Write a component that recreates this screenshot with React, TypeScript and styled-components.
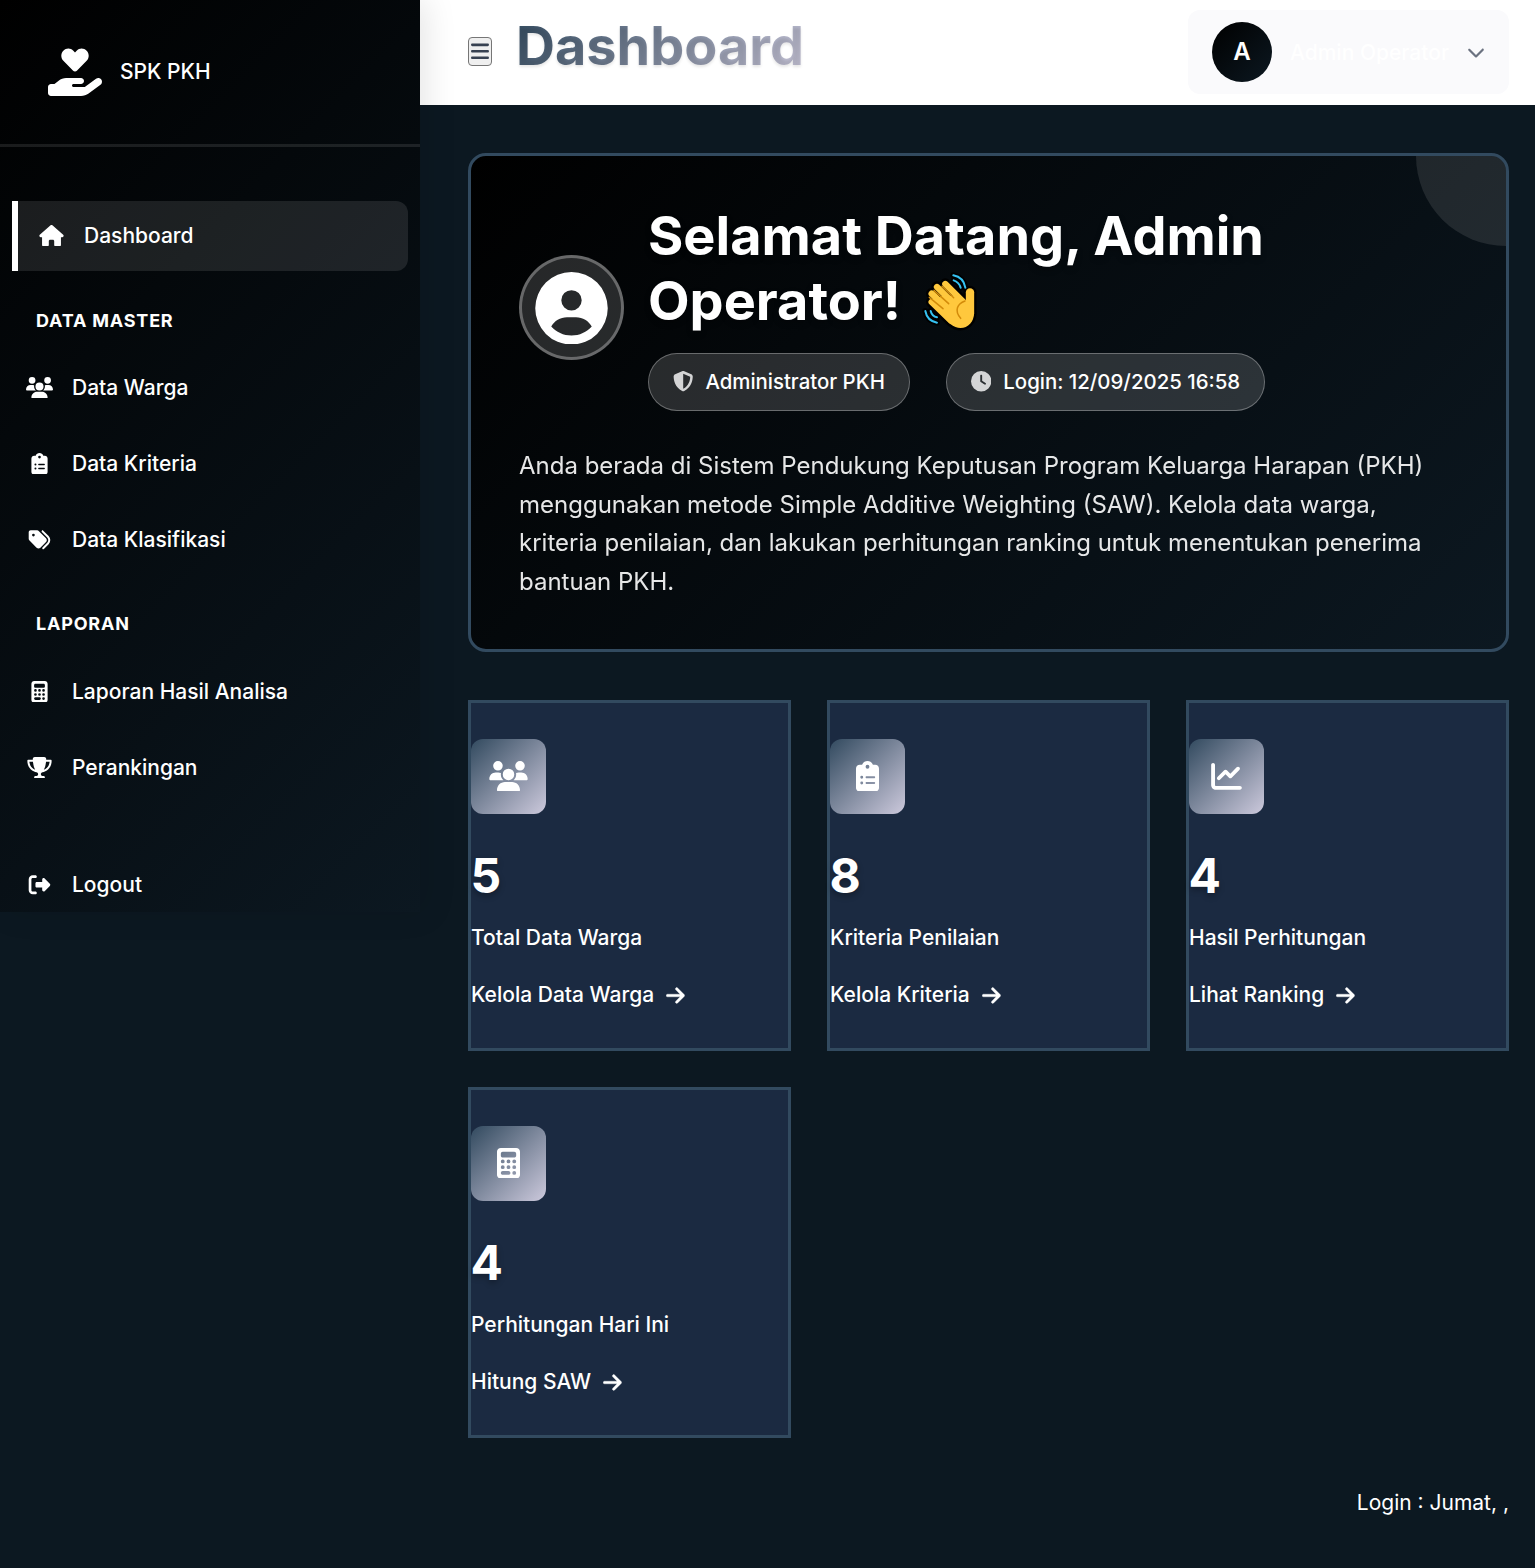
import React from "react";
import styled, { createGlobalStyle } from "styled-components";
import {
  FaArrowRight, FaBars, FaCalculator, FaChartLine, FaChevronDown, FaCircleUser, FaClipboardList,
  FaClock, FaHandHoldingHeart, FaHouse, FaRightFromBracket, FaShieldHalved, FaTags, FaTrophy, FaUsers,
} from "react-icons/fa6";

const Global = createGlobalStyle`
  *, *::before, *::after { box-sizing: border-box; }
  body { margin: 0; background: #0c1821; color: #fff; font-family: Inter, "Liberation Sans", sans-serif; font-size: 21px; }
  h1, h2, p { margin: 0; }
  a { color: inherit; text-decoration: none; }
`;

const Page = styled.div`
  display: flex;
  align-items: flex-start;
  width: 1535px;
  height: 1568px;
  overflow: hidden;
`;

const Sidebar = styled.aside`
  flex: none;
  width: 420px;
  height: 912px;
  overflow: hidden;
  background: linear-gradient(135deg, #000 0%, #0c1821 100%);
  box-shadow: 6px 0 30px rgba(0, 0, 0, 0.1);
  z-index: 2;
`;

const Brand = styled.div`
  display: flex;
  align-items: center;
  gap: 18px;
  height: 147px;
  padding: 0 48px;
  border-bottom: 3px solid rgba(255, 255, 255, 0.1);
  font-size: 21px;
  line-height: 26px;
  font-weight: 500;
  svg { width: 54px; height: 48px; }
`;

const Nav = styled.nav`
  display: flex;
  flex-direction: column;
  gap: 6px;
  padding: 54px 12px 0;
`;

const NavItem = styled.a<{ $active?: boolean; $spaced?: boolean }>`
  display: flex;
  align-items: center;
  gap: 18px;
  flex: none;
  height: 70px;
  padding: 0 12px 1px;
  margin-top: ${p => (p.$spaced ? 41 : 0)}px;
  font-weight: 500;
  font-size: 21px;
  ${p => p.$active && `
    padding-left: 18px;
    border-left: 6px solid #fff;
    border-radius: 0 12px 12px 0;
    background: rgba(255, 255, 255, 0.1);
  `}
`;

const NavIcon = styled.span`
  display: flex;
  justify-content: center;
  width: 30px;
  svg { width: 27px; height: 21.6px; }
`;

const NavHeading = styled.div<{ $lift?: number }>`
  display: flex;
  align-items: flex-end;
  height: 70px;
  padding: 0 24px ${p => 15 + (p.$lift ?? 0)}px;
  font-size: 18px;
  line-height: 22px;
  font-weight: 700;
  letter-spacing: 0.8px;
`;

const Main = styled.main`
  flex: 1;
  min-width: 0;
`;

const TopBar = styled.header`
  display: flex;
  align-items: center;
  height: 105px;
  padding: 0 26px 0 48px;
  background: #fff;
`;

const MenuButton = styled.button`
  display: flex;
  align-items: center;
  justify-content: center;
  width: 24px;
  height: 29px;
  margin-top: -2px;
  padding: 0 0 1px;
  border: 1px solid #767676;
  border-radius: 4px;
  background: #efefef;
  color: #374151;
  svg { width: 20px; height: 20.5px; }
`;

const Title = styled.h1`
  margin: -14px auto 0 24px;
  font-size: 54px;
  line-height: 66px;
  font-weight: 700;
  background: linear-gradient(135deg, #324a5f 0%, #ccc9dc 100%);
  background-clip: text;
  -webkit-background-clip: text;
  color: transparent;
  text-shadow: 0 1.5px 3px rgba(0, 0, 0, 0.1);
`;

const UserMenu = styled.div`
  display: flex;
  align-items: center;
  height: 84px;
  width: 321px;
  margin-bottom: 1px;
  padding: 0 24px;
  border-radius: 12px;
  background: #fafafc;
  color: #fff;
  font-size: 21px;
  font-weight: 500;
  svg { width: 18px; height: 20px; margin-left: auto; color: #6b7280; }
`;

const Avatar = styled.span`
  display: flex;
  align-items: center;
  justify-content: center;
  width: 60px;
  height: 60px;
  padding-bottom: 1px;
  margin-right: 18px;
  border-radius: 50%;
  background: linear-gradient(135deg, #000, #0c1821);
  font-size: 24px;
  font-weight: 600;
`;

const Content = styled.div`
  padding: 48px 26px 0 48px;
`;

const Welcome = styled.section`
  position: relative;
  height: 499px;
  overflow: hidden;
  padding: 48px;
  border: 3px solid #324a5f;
  border-radius: 18px;
  background: linear-gradient(135deg, #000 0%, #0c1821 100%);
  &::before {
    content: "";
    position: absolute;
    top: -90px;
    right: -90px;
    width: 180px;
    height: 180px;
    border-radius: 50%;
    background: rgba(255, 255, 255, 0.1);
  }
`;

const WelcomeTop = styled.div`
  display: flex;
  align-items: center;
  gap: 24px;
`;

const Portrait = styled.div`
  display: flex;
  align-items: center;
  justify-content: center;
  flex: none;
  width: 105px;
  height: 105px;
  padding-top: 1px;
  border: 3px solid rgba(255, 255, 255, 0.3);
  border-radius: 50%;
  background: rgba(255, 255, 255, 0.15);
  svg { width: 73px; height: 72.5px; }
`;

const Greeting = styled.h2`
  width: 680px;
  margin-top: -1px;
  font-size: 54px;
  line-height: 65px;
  font-weight: 700;
  text-shadow: 0 3px 6px rgba(0, 0, 0, 0.3);
`;

const Wave = styled.svg`
  display: inline-block;
  width: 70px;
  height: 70px;
  margin: -8px 0 -8px 1px;
  vertical-align: -8px;
`;

const Badges = styled.div`
  display: flex;
  gap: 36px;
  margin-top: 20px;
`;

const Badge = styled.span`
  display: flex;
  align-items: center;
  gap: 12px;
  height: 58px;
  padding: 0 24px 1px;
  border: 1px solid rgba(255, 255, 255, 0.3);
  border-radius: 38px;
  background: rgba(255, 255, 255, 0.15);
  font-size: 20.4px;
  font-weight: 500;
  svg { width: 20.4px; height: 20.4px; opacity: 0.8; }
`;

const Intro = styled.p`
  width: 912px;
  margin-top: 36px;
  font-size: 24px;
  line-height: 38.5px;
  opacity: 0.9;
`;

const Stats = styled.div`
  display: grid;
  grid-template-columns: repeat(3, 1fr);
  gap: 36px;
  margin-top: 48px;
`;

const Card = styled.article`
  display: flex;
  flex-direction: column;
  align-items: flex-start;
  height: 351px;
  padding-top: 36px;
  border: 3px solid #324a5f;
  background: #1b2a41;
  font-size: 21px;
  font-weight: 500;
`;

const Tile = styled.span`
  display: flex;
  align-items: center;
  justify-content: center;
  width: 75px;
  height: 75px;
  padding-bottom: 1px;
  border-radius: 12px;
  background: linear-gradient(135deg, #324a5f 0%, #ccc9dc 100%);
  svg { width: 39px; height: 30.7px; }
`;

const Count = styled.strong`
  margin: 33px 0 0 -0.5px;
  font-size: 48px;
  line-height: 58px;
  font-weight: 700;
  text-shadow: 0 3px 6px rgba(0, 0, 0, 0.3);
`;

const Label = styled.span`
  margin-top: 20px;
  line-height: 26px;
`;

const CardLink = styled.a`
  display: flex;
  align-items: center;
  gap: 12px;
  margin-top: 31px;
  line-height: 26px;
  svg { width: 18.8px; height: 21px; stroke: currentColor; stroke-width: 8; }
`;

const Footer = styled.footer`
  margin-top: 52px;
  text-align: right;
  font-size: 21px;
  line-height: 26px;
`;

const cards = [
  { icon: <FaUsers />, count: 5, label: "Total Data Warga", link: "Kelola Data Warga" },
  { icon: <FaClipboardList />, count: 8, label: "Kriteria Penilaian", link: "Kelola Kriteria" },
  { icon: <FaChartLine />, count: 4, label: "Hasil Perhitungan", link: "Lihat Ranking" },
  { icon: <FaCalculator />, count: 4, label: "Perhitungan Hari Ini", link: "Hitung SAW" },
];

type NavLinkProps = { icon: React.ReactNode; label: string; active?: boolean; spaced?: boolean };

const NavLink = ({ icon, label, active, spaced }: NavLinkProps) => (
  <NavItem href="#" $active={active} $spaced={spaced}>
    <NavIcon>{icon}</NavIcon>
    {label}
  </NavItem>
);

const motion = "M115 28Q146 34 151 65M116 43Q132 48 137 65M31 135Q36 164 66 170M47 135Q51 151 66 154";
const fingers = "M91 54L142 105M66 63L120 116M50 83L110 140M50 108L108 164";
const palm = "M135 88L152 102L177 140C178 180 138 200 106 174L50 116L80 90Z";
const thumb = "M165 79V142";

const WavingHand = () => (
  <Wave viewBox="0 0 210 210" fill="none" strokeLinecap="round" strokeLinejoin="round">
    <g stroke="#000">
      <path d={motion} strokeWidth="18" />
      <path d={fingers} strokeWidth="34" />
      <path d={palm} strokeWidth="15" fill="#000" />
      <path d={thumb} strokeWidth="39" />
    </g>
    <g stroke="#ffc83d">
      <path d={fingers} strokeWidth="19" />
      <path d={palm} fill="#ffc83d" strokeWidth="0" />
      <path d={thumb} strokeWidth="25" />
    </g>
    <path d="M81 61L116 95M57 73L101 113M43 94L84 128M150 105C127 113 117 134 137 157" stroke="#d38b0a" strokeWidth="4.5" />
    <path d={motion} stroke="#35c1f1" strokeWidth="6" />
  </Wave>
);

export default function App() {
  return (
    <Page>
      <Global />
      <Sidebar>
        <Brand><FaHandHoldingHeart />SPK PKH</Brand>
        <Nav>
          <NavLink icon={<FaHouse />} label="Dashboard" active />
          <NavHeading>DATA MASTER</NavHeading>
          <NavLink icon={<FaUsers />} label="Data Warga" />
          <NavLink icon={<FaClipboardList />} label="Data Kriteria" />
          <NavLink icon={<FaTags />} label="Data Klasifikasi" />
          <NavHeading $lift={1}>LAPORAN</NavHeading>
          <NavLink icon={<FaCalculator />} label="Laporan Hasil Analisa" />
          <NavLink icon={<FaTrophy />} label="Perankingan" />
          <NavLink icon={<FaRightFromBracket />} label="Logout" spaced />
        </Nav>
      </Sidebar>
      <Main>
        <TopBar>
          <MenuButton aria-label="Menu"><FaBars /></MenuButton>
          <Title>Dashboard</Title>
          <UserMenu><Avatar>A</Avatar>Admin Operator<FaChevronDown /></UserMenu>
        </TopBar>
        <Content>
          <Welcome>
            <WelcomeTop>
              <Portrait><FaCircleUser /></Portrait>
              <div>
                <Greeting>Selamat Datang, Admin Operator! <WavingHand /></Greeting>
                <Badges>
                  <Badge><FaShieldHalved />Administrator PKH</Badge>
                  <Badge><FaClock />Login: 12/09/2025 16:58</Badge>
                </Badges>
              </div>
            </WelcomeTop>
            <Intro>
              Anda berada di Sistem Pendukung Keputusan Program Keluarga Harapan (PKH) menggunakan metode
              Simple Additive Weighting (SAW). Kelola data warga, kriteria penilaian, dan lakukan perhitungan
              ranking untuk menentukan penerima bantuan PKH.
            </Intro>
          </Welcome>
          <Stats>
            {cards.map(c => (
              <Card key={c.label}>
                <Tile>{c.icon}</Tile>
                <Count>{c.count}</Count>
                <Label>{c.label}</Label>
                <CardLink href="#">{c.link}<FaArrowRight /></CardLink>
              </Card>
            ))}
          </Stats>
          <Footer>Login : Jumat, ,</Footer>
        </Content>
      </Main>
    </Page>
  );
}
